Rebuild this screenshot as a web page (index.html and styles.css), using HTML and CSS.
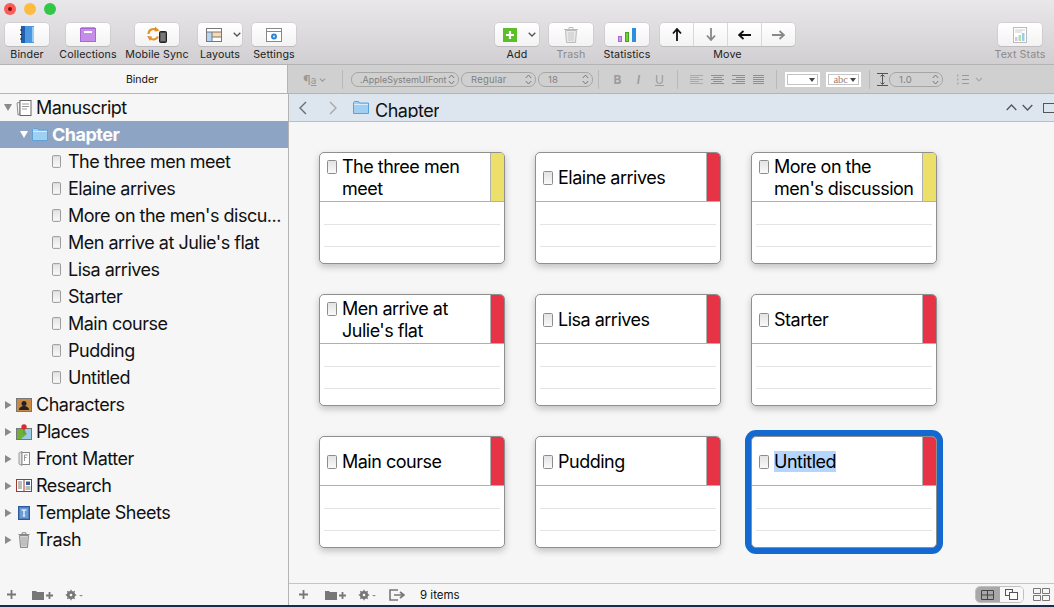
FILE: index.html
```html
<!DOCTYPE html>
<html lang="en">
<head>
<meta charset="utf-8">
<title>Scrivener</title>
<link rel="stylesheet" href="styles.css">
</head>
<body>
<svg class="defs" width="0" height="0" aria-hidden="true">
  <defs><linearGradient id="docfill" x1="0" y1="0" x2="0" y2="1"><stop offset="0" stop-color="#e2e2e2"/><stop offset="1" stop-color="#fafafa"/></linearGradient></defs>
  <symbol id="doc" viewBox="0 0 10 14"><rect x=".5" y=".5" width="9" height="13" rx="1" fill="url(#docfill)" stroke="#8c8c8c"/></symbol>
  <symbol id="tri-r" viewBox="0 0 8 10"><path d="M1 1l6.500 4L1 9z" fill="#8a8a8a"/></symbol>
  <symbol id="tri-d" viewBox="0 0 10 8"><path d="M1 0h8L5 7z" fill="#8a8a8a"/></symbol>
  <symbol id="chev" viewBox="0 0 8 5"><path d="M.7.7L4 4 7.3.7" fill="none" stroke="#555" stroke-width="1.3"/></symbol>
  <symbol id="updown" viewBox="0 0 7 11"><path d="M.8 4L3.5 1 6.2 4M.8 7l2.7 3 2.7-3" fill="none" stroke="#777" stroke-width="1"/></symbol>
  <symbol id="folderplus" viewBox="0 0 21 11"><path d="M0 2h4l1 1h7v8H0z" fill="#777"/><path d="M14 6.500h7M17.500 3v7" stroke="#777" stroke-width="1.800"/></symbol>
  <symbol id="plus" viewBox="0 0 9 9"><path d="M0 4.500h9M4.500 0v9" stroke="#777" stroke-width="1.800"/></symbol>
  <symbol id="gear" viewBox="0 0 18 12"><circle cx="6" cy="6" r="3" fill="none" stroke="#777" stroke-width="2.200"/><path d="M6 .8v10.400M.8 6h10.400M2.300 2.300l7.400 7.400M9.700 2.300l-7.400 7.400" stroke="#777" stroke-width="1.300"/><circle cx="6" cy="6" r="1.300" fill="#f6f6f6"/><path d="M14 6h4l-2 1.600z" fill="#888"/></symbol>
</svg>

<div class="app">
  <header class="toolbar">
    <div class="lights"><span class="light red"></span><span class="light yellow"></span><span class="light green"></span></div>
    <div class="tools">
      <div class="tool t-binder"><div class="btn"><svg width="15" height="17" viewBox="0 0 15 17"><rect x="1" y="0" width="13" height="17" fill="#4a97e0"/><rect x="1" y="0" width="4" height="17" fill="#1f5fae"/><rect x="12" y="1" width="2" height="15" fill="#9ccbf0"/><path d="M0 4h2M0 8.500h2M0 13h2" stroke="#222" stroke-width="1"/></svg></div><span class="label">Binder</span></div>
      <div class="tool t-coll"><div class="btn"><svg width="16" height="15" viewBox="0 0 16 15"><rect x="1" y="0" width="14" height="2" fill="#8fbf7a"/><rect x=".5" y="1.500" width="15" height="13" fill="#c68cea" stroke="#a768cf"/><rect x="4" y="4" width="8" height="2" fill="#fff"/></svg></div><span class="label">Collections</span></div>
      <div class="tool t-sync"><div class="btn"><svg width="20" height="17" viewBox="0 0 20 17"><path d="M1.500 8a5 5 0 0 1 9-3M11 10.500a5 5 0 0 1-7.500 2" fill="none" stroke="#e59120" stroke-width="2"/><path d="M8 .5l4.500 4-5 1zM0 10l5 .5-2 4.500z" fill="#e59120"/><rect x="12.500" y="5.500" width="7" height="11" rx="1" fill="#444" stroke="#222"/><rect x="13.500" y="7" width="5" height="8" fill="#777"/></svg></div><span class="label">Mobile Sync</span></div>
      <div class="tool t-layouts"><div class="btn btn-split"><svg width="16" height="14" viewBox="0 0 16 14"><rect x=".5" y=".5" width="15" height="13" fill="#fff" stroke="#777"/><rect x="1" y="4" width="5" height="9" fill="#b5d5f5"/><rect x="6" y="4" width="9" height="5" fill="#fbd9b0"/><path d="M1 4h14M6 4v9M6 9h9" stroke="#777" fill="none"/></svg><svg class="chev" width="8" height="5"><use href="#chev"/></svg></div><span class="label">Layouts</span></div>
      <div class="tool t-settings"><div class="btn"><svg width="16" height="14" viewBox="0 0 16 14"><rect x=".5" y=".5" width="15" height="13" fill="#fff" stroke="#888"/><path d="M1 3.500h14" stroke="#888"/><circle cx="8" cy="8.500" r="2.200" fill="#2a84d8" stroke="#2a84d8" stroke-width="1.500"/><circle cx="8" cy="8.500" r=".9" fill="#fff"/></svg></div><span class="label">Settings</span></div>

      <div class="tool t-add"><div class="btn btn-split"><svg width="14" height="14" viewBox="0 0 14 14"><rect width="14" height="14" fill="#5cbf2a"/><path d="M3 7h8M7 3v8" stroke="#fff" stroke-width="2.200"/></svg><svg class="chev" width="8" height="5"><use href="#chev"/></svg></div><span class="label">Add</span></div>
      <div class="tool t-trash dim"><div class="btn"><svg width="14" height="16" viewBox="0 0 14 16"><path d="M0 2.500h14M5 2V.5h4V2" fill="none" stroke="#bbb"/><path d="M1.500 3.500l1 12h9l1-12z" fill="#e9e9e9" stroke="#bbb"/><path d="M5 5v9M7 5v9M9 5v9" stroke="#c8c8c8"/></svg></div><span class="label">Trash</span></div>
      <div class="tool t-stats"><div class="btn"><svg width="18" height="14" viewBox="0 0 18 14"><rect x=".5" y="8.500" width="3" height="5" fill="#cf9bef" stroke="#a768cf"/><rect x="7.500" y="4.500" width="3" height="9" fill="#6fcf3a" stroke="#45a51d"/><rect x="14" y="0" width="4" height="14" fill="#2a8fe0"/></svg></div><span class="label">Statistics</span></div>
      <div class="tool t-move">
        <div class="seg">
          <span class="seg-item"><svg width="10" height="13" viewBox="0 0 10 13"><path d="M5 13V2M1 5.500L5 1l4 4.500" fill="none" stroke="#111" stroke-width="1.800"/></svg></span>
          <span class="seg-item"><svg width="10" height="13" viewBox="0 0 10 13"><path d="M5 0v11M1 7.500L5 12l4-4.500" fill="none" stroke="#888" stroke-width="1.800"/></svg></span>
          <span class="seg-item"><svg width="13" height="10" viewBox="0 0 13 10"><path d="M13 5H2M5.500 1L1 5l4.500 4" fill="none" stroke="#111" stroke-width="1.800"/></svg></span>
          <span class="seg-item"><svg width="13" height="10" viewBox="0 0 13 10"><path d="M0 5h11M7.500 1L12 5 7.500 9" fill="none" stroke="#888" stroke-width="1.800"/></svg></span>
        </div>
        <span class="label">Move</span>
      </div>
      <div class="tool t-textstats dim"><div class="btn"><svg width="14" height="16" viewBox="0 0 14 16"><rect x=".5" y=".5" width="13" height="15" fill="#fff" stroke="#bbb"/><path d="M2 3h10M2 5h7" stroke="#ccc"/><rect x="2" y="10" width="2.500" height="4" fill="#d9c2ef"/><rect x="5.500" y="8" width="2.500" height="6" fill="#b5e0a0"/><rect x="9" y="6" width="2.500" height="8" fill="#9ccbf0"/></svg></div><span class="label">Text Stats</span></div>
    </div>
  </header>

  <div class="ribbon">
    <div class="binder-title">Binder</div>
    <div class="format">
      <span class="fmt-style">¶<u>a</u><svg width="7" height="4" viewBox="0 0 8 5"><path d="M.7.7L4 4 7.300.7" fill="none" stroke="#999" stroke-width="1.300"/></svg></span>
      <i class="sep s1"></i>
      <span class="pill p-font">.AppleSystemUIFont<svg width="7" height="11"><use href="#updown"/></svg></span>
      <span class="pill p-weight">Regular<svg width="7" height="11"><use href="#updown"/></svg></span>
      <span class="pill p-size">18<svg width="7" height="11"><use href="#updown"/></svg></span>
      <i class="sep s2"></i>
      <span class="bold">B</span><span class="ital">I</span><span class="under">U</span>
      <i class="sep s3"></i>
      <svg class="al a1" width="13" height="9" viewBox="0 0 13 9"><path d="M0 .5h13M0 2.500h9M0 4.500h13M0 6.500h9M0 8.500h13" stroke="#7fb2e8"/></svg>
      <svg class="al" width="13" height="9" viewBox="0 0 13 9"><path d="M0 .5h13M2 2.500h9M0 4.500h13M2 6.500h9M0 8.500h13" stroke="#8f8f8f"/></svg>
      <svg class="al" width="13" height="9" viewBox="0 0 13 9"><path d="M0 .5h13M4 2.500h9M0 4.500h13M4 6.500h9M0 8.500h13" stroke="#8f8f8f"/></svg>
      <svg class="al" width="11" height="9" viewBox="0 0 11 9"><path d="M0 .5h11M0 2.500h11M0 4.500h11M0 6.500h11M0 8.500h11" stroke="#8f8f8f"/></svg>
      <i class="sep s4"></i>
      <span class="well w1"><span class="well-in"><b class="arrow"></b></span></span>
      <span class="well w2"><span class="well-in"><em class="abc">abc</em><b class="arrow"></b></span></span>
      <i class="sep s5"></i>
      <svg class="lineh" width="11" height="13" viewBox="0 0 11 13"><path d="M0 .5h11M0 12.500h11" stroke="#555"/><path d="M5.500 2v9M3.500 3.500l2-2 2 2M3.500 9.500l2 2 2-2" fill="none" stroke="#555"/></svg>
      <span class="pill p-line">1.0<svg width="7" height="11"><use href="#updown"/></svg></span>
      <svg class="list" width="26" height="11" viewBox="0 0 26 11"><path d="M5 1.500h7M5 5.500h7M5 9.500h7" stroke="#999"/><path d="M0 1.500h2M0 5.500h2M0 9.500h2" stroke="#aaa" stroke-width="2" stroke-dasharray="1 .5"/><path d="M19 4l3 3 3-3" fill="none" stroke="#aaa" stroke-width="1.200"/></svg>
    </div>
  </div>

  <div class="body">
    <aside class="sidebar">
      <ul class="tree">
        <li class="row"><svg class="tri" width="10" height="8"><use href="#tri-d"/></svg><svg class="ico" width="16" height="16" viewBox="0 0 16 16"><path d="M1 3l3-1v12l-2 1z" fill="#f4f4f4" stroke="#777" stroke-width=".8"/><rect x="4" y=".5" width="11" height="15" fill="#fff" stroke="#666"/><path d="M6 4h7M6 6.500h7M6 9h5" stroke="#999"/></svg><span>Manuscript</span></li>
        <li class="row current"><svg class="tri" width="10" height="8" viewBox="0 0 10 8"><path d="M1 0h8L5 7z" fill="#fff"/></svg><svg class="ico" width="16" height="13" viewBox="0 0 16 13"><path d="M.5 12.500V1.500l1-1h4l1 1.500h9v10.500z" fill="#9fd0f2" stroke="#5da2d6"/><path d="M1 3.500h14" stroke="#d5ecfb"/></svg><span>Chapter</span></li>
        <li class="row child"><svg class="doc" width="9" height="13"><use href="#doc"/></svg><span>The three men meet</span></li>
        <li class="row child"><svg class="doc" width="9" height="13"><use href="#doc"/></svg><span>Elaine arrives</span></li>
        <li class="row child"><svg class="doc" width="9" height="13"><use href="#doc"/></svg><span>More on the men's discu...</span></li>
        <li class="row child"><svg class="doc" width="9" height="13"><use href="#doc"/></svg><span>Men arrive at Julie's flat</span></li>
        <li class="row child"><svg class="doc" width="9" height="13"><use href="#doc"/></svg><span>Lisa arrives</span></li>
        <li class="row child"><svg class="doc" width="9" height="13"><use href="#doc"/></svg><span>Starter</span></li>
        <li class="row child"><svg class="doc" width="9" height="13"><use href="#doc"/></svg><span>Main course</span></li>
        <li class="row child"><svg class="doc" width="9" height="13"><use href="#doc"/></svg><span>Pudding</span></li>
        <li class="row child"><svg class="doc" width="9" height="13"><use href="#doc"/></svg><span>Untitled</span></li>
        <li class="row"><svg class="tri tr" width="8" height="10"><use href="#tri-r"/></svg><svg class="ico" width="16" height="14" viewBox="0 0 16 14"><rect x=".5" y=".5" width="15" height="13" fill="#c98a45" stroke="#777"/><circle cx="8" cy="5.500" r="2.500" fill="#222"/><path d="M3 12c0-3 3-4 5-4s5 1 5 4z" fill="#222"/></svg><span>Characters</span></li>
        <li class="row"><svg class="tri tr" width="8" height="10"><use href="#tri-r"/></svg><svg class="ico" width="16" height="16" viewBox="0 0 16 16"><rect x=".5" y="4.500" width="15" height="11" fill="#9ccbe8" stroke="#777"/><path d="M1 5h7l3 5-6 5H1z" fill="#6fb03a"/><circle cx="8" cy="3" r="2.700" fill="#e02a2a"/><path d="M8 5v5" stroke="#777"/></svg><span>Places</span></li>
        <li class="row"><svg class="tri tr" width="8" height="10"><use href="#tri-r"/></svg><svg class="ico" width="16" height="15" viewBox="0 0 16 15"><path d="M3 2l3-1.500v14L3 13z" fill="#e4e4e4" stroke="#888" stroke-width=".8"/><rect x="6" y="1.500" width="7.500" height="12" fill="#fff" stroke="#888"/><path d="M8.500 4h3M8.500 4v6M8.500 6.500h2" stroke="#999"/></svg><span>Front Matter</span></li>
        <li class="row"><svg class="tri tr" width="8" height="10"><use href="#tri-r"/></svg><svg class="ico" width="16" height="13" viewBox="0 0 16 13"><rect x=".5" y=".5" width="15" height="12" fill="#fff" stroke="#9a3b2c"/><path d="M2 3h4M2 5h4M2 7h4M2 9h4" stroke="#777"/><path d="M8 1v11" stroke="#9a3b2c"/><rect x="10" y="2.500" width="4" height="3.500" fill="#2b5f9e"/><path d="M9.500 8h5M9.500 10h5" stroke="#777"/></svg><span>Research</span></li>
        <li class="row"><svg class="tri tr" width="8" height="10"><use href="#tri-r"/></svg><svg class="ico" width="16" height="14" viewBox="0 0 16 14"><rect x="2.500" y=".5" width="11" height="13" fill="#4f7fc0" stroke="#2c5a9a"/><rect x="4" y="2" width="8" height="10" fill="#6c9ad6"/><path d="M5.500 4h5M8 4v6M6.800 10h2.400" stroke="#fff" stroke-width="1.200" fill="none"/></svg><span>Template Sheets</span></li>
        <li class="row"><svg class="tri tr" width="8" height="10"><use href="#tri-r"/></svg><svg class="ico" width="16" height="16" viewBox="0 0 16 16"><path d="M2.500 2.500h11M6 2V.8h4V2" fill="none" stroke="#888"/><path d="M3.500 3.500l1 12h7l1-12z" fill="#d5d5d5" stroke="#888"/><path d="M6 5v9M8 5v9M10 5v9" stroke="#aaa"/></svg><span>Trash</span></li>
      </ul>
      <footer class="side-foot">
        <svg width="9" height="9"><use href="#plus"/></svg>
        <svg class="sf-folder" width="21" height="11"><use href="#folderplus"/></svg>
        <svg class="sf-gear" width="18" height="12"><use href="#gear"/></svg>
      </footer>
    </aside>

    <main class="main">
      <div class="pathbar">
        <svg class="nav" width="9" height="14" viewBox="0 0 9 14"><path d="M8 1L2 7l6 6" fill="none" stroke="#6e6e6e" stroke-width="1.400"/></svg>
        <svg class="nav nav2" width="9" height="14" viewBox="0 0 9 14"><path d="M1 1l6 6-6 6" fill="none" stroke="#a8a8a8" stroke-width="1.400"/></svg>
        <svg class="pfolder" width="16" height="13" viewBox="0 0 16 13"><path d="M.5 12.500V1.500l1-1h4l1 1.500h9v10.500z" fill="#9fd0f2" stroke="#5da2d6"/><path d="M1 3.500h14" stroke="#d5ecfb"/></svg>
        <span class="crumb">Chapter</span>
        <span class="path-right">
          <svg class="pr-up" width="11" height="7" viewBox="0 0 11 7"><path d="M.7 6L5.500 1l4.800 5" fill="none" stroke="#555" stroke-width="1.300"/></svg>
          <svg class="pr-down" width="11" height="7" viewBox="0 0 11 7"><path d="M.7 1l4.800 5 4.800-5" fill="none" stroke="#555" stroke-width="1.300"/></svg>
          <svg class="pr-box" width="11" height="10" viewBox="0 0 11 10"><rect x=".5" y=".5" width="12" height="9" fill="none" stroke="#555"/></svg>
        </span>
      </div>

      <div class="corkboard">
        <article class="card"><div class="card-head"><div class="card-title"><svg class="doc" width="10" height="14"><use href="#doc"/></svg><h3>The three men meet</h3></div><i class="flag yellow-flag"></i></div><div class="card-body"></div></article>
        <article class="card"><div class="card-head"><div class="card-title"><svg class="doc" width="10" height="14"><use href="#doc"/></svg><h3>Elaine arrives</h3></div><i class="flag red-flag"></i></div><div class="card-body"></div></article>
        <article class="card"><div class="card-head"><div class="card-title"><svg class="doc" width="10" height="14"><use href="#doc"/></svg><h3>More on the men's discussion</h3></div><i class="flag yellow-flag"></i></div><div class="card-body"></div></article>
        <article class="card"><div class="card-head"><div class="card-title"><svg class="doc" width="10" height="14"><use href="#doc"/></svg><h3>Men arrive at Julie's flat</h3></div><i class="flag red-flag"></i></div><div class="card-body"></div></article>
        <article class="card"><div class="card-head"><div class="card-title"><svg class="doc" width="10" height="14"><use href="#doc"/></svg><h3>Lisa arrives</h3></div><i class="flag red-flag"></i></div><div class="card-body"></div></article>
        <article class="card"><div class="card-head"><div class="card-title"><svg class="doc" width="10" height="14"><use href="#doc"/></svg><h3>Starter</h3></div><i class="flag red-flag"></i></div><div class="card-body"></div></article>
        <article class="card"><div class="card-head"><div class="card-title"><svg class="doc" width="10" height="14"><use href="#doc"/></svg><h3>Main course</h3></div><i class="flag red-flag"></i></div><div class="card-body"></div></article>
        <article class="card"><div class="card-head"><div class="card-title"><svg class="doc" width="10" height="14"><use href="#doc"/></svg><h3>Pudding</h3></div><i class="flag red-flag"></i></div><div class="card-body"></div></article>
        <article class="card selected"><div class="card-head"><div class="card-title"><svg class="doc" width="10" height="14"><use href="#doc"/></svg><h3><mark>Untitled</mark></h3></div><i class="flag red-flag"></i></div><div class="card-body"></div></article>
      </div>

      <footer class="main-foot">
        <svg class="f-plus" width="9" height="9"><use href="#plus"/></svg>
        <svg class="f-folder" width="21" height="11"><use href="#folderplus"/></svg>
        <svg class="f-gear" width="18" height="12"><use href="#gear"/></svg>
        <svg class="f-export" width="16" height="12" viewBox="0 0 16 12"><path d="M9 1H1v10h8" fill="none" stroke="#777" stroke-width="1.600"/><path d="M5 6h9M11 3l4 3-4 3" fill="none" stroke="#777" stroke-width="1.600"/></svg>
        <span class="count">9 items</span>
        <span class="view-right">
          <span class="vseg">
            <span class="vseg-on"><svg width="13" height="10" viewBox="0 0 13 10"><path d="M.5.500h12v9H.5zM6.500.5v9M.5 5h12" fill="none" stroke="#444"/></svg></span>
            <span class="vseg-off"><svg width="13" height="11" viewBox="0 0 13 11"><rect x=".5" y=".5" width="7" height="6" fill="none" stroke="#555"/><rect x="4.500" y="3.500" width="8" height="7" fill="#fff" stroke="#555"/></svg></span>
          </span>
          <svg class="vgrid" width="17" height="13" viewBox="0 0 17 13"><path d="M.5.500h7v5h-7zM9.500.5h7v5h-7zM.5 7.500h7v5h-7zM9.500 7.500h7v5h-7z" fill="none" stroke="#777"/></svg>
        </span>
      </footer>
    </main>
  </div>
  <div class="desktop-edge"></div>
</div>
</body>
</html>
```
FILE: styles.css
```css
* { box-sizing: border-box; }
html, body { margin: 0; padding: 0; height: 100%; overflow: hidden; }
body { font-family: Inter, Roboto, "Liberation Sans", sans-serif; color: #111; background: #f6f6f6; }
.defs { display: block; height: 0; }
svg { display: block; flex: none; }
.app { display: flex; flex-direction: column; width: 1054px; height: 607px; }

/* toolbar */
.toolbar { height: 65px; flex: none; background: linear-gradient(#e9e7e9, #d1cfd1); border-bottom: 1px solid #b4b4b4; }
.lights { display: flex; gap: 8px; padding: 3px 0 0 4px; height: 23px; }
.light { width: 12px; height: 12px; border-radius: 50%; }
.light.red { background: #fc5b57; position: relative; }
.light.red::after { content: ""; position: absolute; left: 4px; top: 4px; width: 4px; height: 4px; border-radius: 50%; background: #7a1410; }
.light.yellow { background: #fdbc40; }
.light.green { background: #33c748; }
.tools { display: flex; padding-left: 5px; }
.tool { width: 44px; display: flex; flex-direction: column; align-items: center; flex: none; }
.label { font-size: 10.700px; line-height: 13px; margin-top: 2px; white-space: nowrap; color: #222; letter-spacing: .1px; }
.dim .label { color: #8b8b8b; }
.btn { width: 44px; height: 23px; background: linear-gradient(#fff, #f3f3f3); border-radius: 4px; box-shadow: 0 0 0 .5px #c4c2c4, 0 1px 0 #b8b6b8; display: flex; align-items: center; justify-content: center; }
.btn-split { justify-content: flex-start; padding-left: 8px; gap: 11px; }
.t-coll { margin-left: 17px; }
.t-sync { margin-left: 25px; }
.t-layouts { margin-left: 19px; }
.t-settings { margin-left: 10px; }
.t-add { margin-left: 199px; }
.t-trash { margin-left: 10px; }
.t-stats { margin-left: 12px; }
.t-move { margin-left: 11px; width: 135px; }
.t-textstats { margin-left: 203px; }
.seg { display: flex; width: 135px; height: 23px; background: linear-gradient(#fff, #f3f3f3); border-radius: 4px; box-shadow: 0 0 0 .5px #c4c2c4, 0 1px 0 #b8b6b8; }
.seg-item { flex: 1; display: flex; align-items: center; justify-content: center; border-left: 1px solid #d8d8d8; }
.seg-item:first-child { border-left: 0; }

/* ribbon */
.ribbon { height: 29px; flex: none; display: flex; border-bottom: 1px solid #b4b4b4; }
.binder-title { width: 288px; flex: none; background: #f6f6f6; border-right: 1px solid #b4b4b4; font-size: 10.500px; display: flex; align-items: center; justify-content: center; padding: 1px 3px 0 0; }
.format { flex: 1; background: #d0d0d0; display: flex; align-items: center; color: #888; font-size: 9.500px; padding-top: 1px; }
.sep { width: 1px; height: 19px; background: #b9b9b9; flex: none; }
.fmt-style { display: flex; align-items: center; gap: 3px; margin-left: 15px; font-size: 13px; color: #999; width: 38px; }
.fmt-style u { margin-left: -3px; font-size: 10px; }
.pill { height: 15px; border: 1px solid #a6a6a6; border-radius: 7px; display: flex; align-items: center; justify-content: space-between; padding: 0 3px 0 9px; flex: none; letter-spacing: .2px; color: #808080; white-space: nowrap; overflow: hidden; }
.s1 { margin-left: 1px; }
.p-font { width: 108px; margin-left: 8px; padding-left: 8px; font-size: 9px; letter-spacing: 0; }
.p-weight { width: 75px; margin-left: 2px; }
.p-size { width: 55px; margin-left: 2px; }
.s2 { margin-left: 5px; }
.bold, .ital, .under { font-size: 12px; color: #9c9c9c; width: 21px; text-align: center; flex: none; }
.bold { font-weight: 700; margin-left: 8px; }
.ital { font-style: italic; font-weight: 600; }
.under { text-decoration: underline; }
.s3 { margin-left: 7px; }
.al { margin-right: 8px; }
.a1 { margin-left: 12px; }
.s4 { margin-left: 4px; }
.well { width: 35px; height: 15px; background: #fff; padding: 2px; flex: none; display: block; }
.w1 { margin-left: 8px; }
.w2 { margin-left: 6px; }
.well-in { display: flex; align-items: center; justify-content: flex-end; height: 100%; border: 1px solid #c4c4c4; padding-right: 2px; gap: 2px; }
.abc { font: normal 10.500px/9px "Liberation Serif", serif; color: #9a7a7a; }
.arrow { width: 0; height: 0; border: 3px solid transparent; border-top: 4px solid #444; border-bottom: 0; }
.s5 { margin-left: 8px; }
.lineh { margin-left: 7px; }
.p-line { width: 54px; margin-left: 1px; }
.list { margin-left: 14px; }

/* body */
.body { flex: 1; display: flex; min-height: 0; }
.sidebar { width: 288px; flex: none; display: flex; flex-direction: column; background: #f6f6f6; }
.tree { list-style: none; margin: 0; padding: 0; flex: 1; }
.row { height: 27px; display: flex; align-items: center; font-size: 18px; letter-spacing: -.5px; white-space: nowrap; padding-left: 3px; }
.tri { width: 10px; margin-right: 3px; }
.tri.tr { width: 8px; margin-left: 1px; margin-right: 4px; }
.ico { margin-right: 4px; }
.current { background: #8ea4c4; color: #fff; font-weight: 700; padding-left: 19px; }
.child { padding-left: 52px; }
.child .doc { margin-right: 7px; }
.side-foot { height: 21px; flex: none; display: flex; align-items: center; padding-left: 7px; }
.sf-folder { margin-left: 16px; }
.sf-gear { margin-left: 12px; }

/* main */
.main { flex: 1; display: flex; flex-direction: column; min-width: 0; border-left: 1px solid #b4b4b4; }
.pathbar { height: 28px; flex: none; background: #dde5ef; border-bottom: 1px solid #b9bfc6; display: flex; align-items: center; padding-left: 9px; overflow: hidden; }
.nav2 { margin-left: 22px; }
.pfolder { margin-left: 15px; }
.crumb { font-size: 18px; letter-spacing: -.5px; margin-left: 6px; line-height: 21px; height: 18px; overflow: hidden; align-self: flex-start; margin-top: 6px; }
.path-right { margin-left: auto; display: flex; align-items: center; }
.pr-down { margin-left: 5px; }
.pr-box { margin-left: 10px; }
.corkboard { flex: 1; display: grid; grid-template-columns: repeat(3, 186px); grid-auto-rows: 112px; column-gap: 30px; row-gap: 30px; padding: 30px 0 0 30px; background: #f6f6f6; align-content: start; }
.card { background: #fff; border: 1px solid #8f8f8f; border-radius: 5px; box-shadow: 0 3px 7px rgba(0,0,0,.22); display: flex; flex-direction: column; overflow: hidden; }
.card-head { height: 49px; flex: none; display: flex; align-items: center; border-bottom: 1px solid #b0b0b0; padding-left: 7px; }
.card-title { flex: 1; min-width: 0; display: flex; align-items: flex-start; padding-top: 2px; }
.card-title .doc { margin-right: 5px; margin-top: 4px; }
.card-title h3 { margin: 0; font-size: 18px; font-weight: 400; line-height: 22px; letter-spacing: -.5px; flex: 1; min-width: 0; color: #000; }
.flag { width: 14px; flex: none; align-self: stretch; border-left: 1px solid #b0b0b0; margin-left: 3px; }
.yellow-flag { background: #ece06a; }
.red-flag { background: #e63446; }
.card-body { flex: 1; margin: 0 4px; background: linear-gradient(#e4e4e4, #e4e4e4) 0 22px / 100% 1px no-repeat, linear-gradient(#e4e4e4, #e4e4e4) 0 44px / 100% 1px no-repeat; }
.selected { box-shadow: 0 0 0 6px #1469d0; }
mark { background: #b4d5fe; color: #000; }
.main-foot { height: 22px; flex: none; background: #f6f6f6; border-top: 1px solid #c4c4c4; display: flex; align-items: center; padding-left: 10px; }
.f-folder { margin-left: 17px; }
.f-gear { margin-left: 12px; }
.f-export { margin-left: 13px; }
.count { font-size: 11.500px; margin-left: 15px; color: #111; }
.view-right { margin-left: auto; display: flex; align-items: center; }
.vseg { display: flex; width: 49px; height: 17px; border-radius: 5px; overflow: hidden; border: 1px solid #c0c0c0; }
.vseg-on { flex: 1; background: #a8a8a8; display: flex; align-items: center; justify-content: center; }
.vseg-off { flex: 1; background: #f8f8f8; display: flex; align-items: center; justify-content: center; }
.vgrid { margin: 0 4px 0 9px; }
.desktop-edge { height: 2px; flex: none; background: #1a2a4a; }
```
